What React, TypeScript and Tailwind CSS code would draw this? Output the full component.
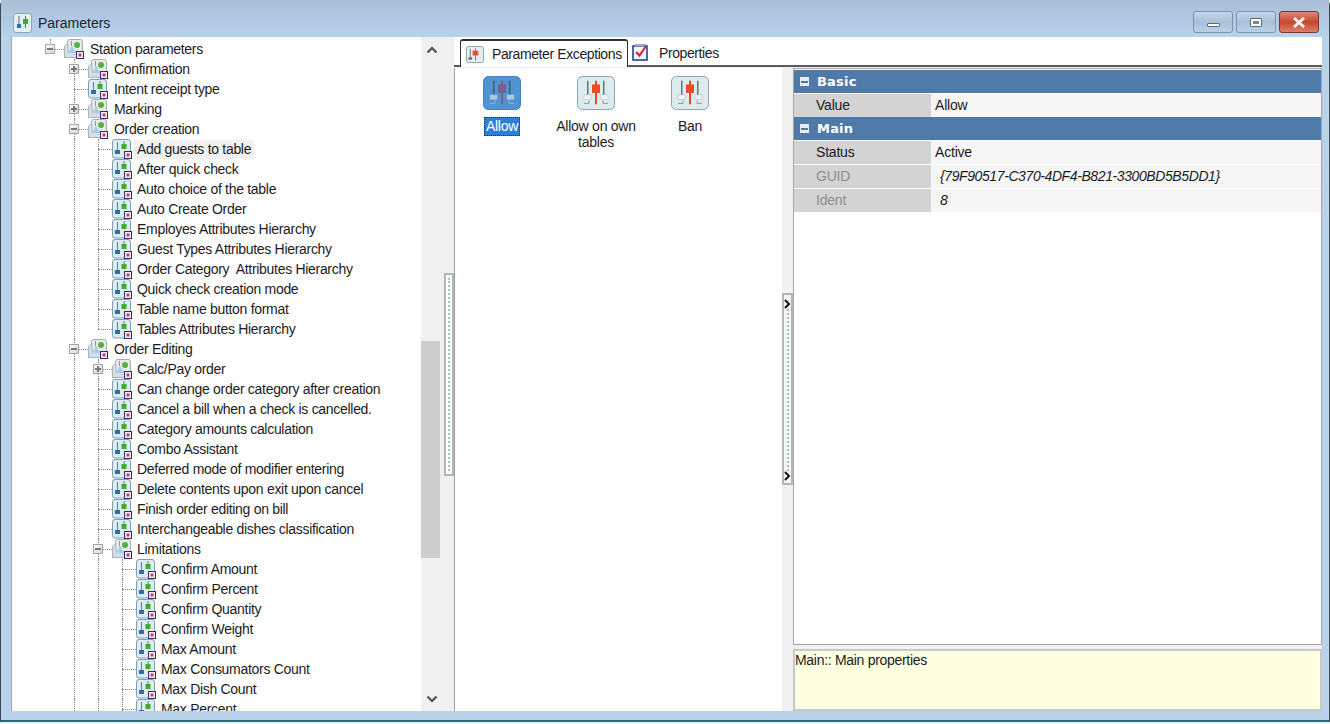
import React from 'react';

type Node = { label: string; level: number; exp?: '+' | '-'; group?: boolean; last?: boolean; under?: number[]; selected?: boolean };

const oc = [1];
const oe = [1];
const lim = [1, 2];

const tree: Node[] = [
  { label: 'Station parameters', level: 0, exp: '-', group: true },
  { label: 'Confirmation', level: 1, exp: '+', group: true },
  { label: 'Intent receipt type', level: 1 },
  { label: 'Marking', level: 1, exp: '+', group: true },
  { label: 'Order creation', level: 1, exp: '-', group: true },
  { label: 'Add guests to table', level: 2, under: oc, selected: true },
  { label: 'After quick check', level: 2, under: oc },
  { label: 'Auto choice of the table', level: 2, under: oc },
  { label: 'Auto Create Order', level: 2, under: oc },
  { label: 'Employes Attributes Hierarchy', level: 2, under: oc },
  { label: 'Guest Types Attributes Hierarchy', level: 2, under: oc },
  { label: 'Order Category  Attributes Hierarchy', level: 2, under: oc },
  { label: 'Quick check creation mode', level: 2, under: oc },
  { label: 'Table name button format', level: 2, under: oc },
  { label: 'Tables Attributes Hierarchy', level: 2, under: oc, last: true },
  { label: 'Order Editing', level: 1, exp: '-', group: true },
  { label: 'Calc/Pay order', level: 2, exp: '+', group: true, under: oe },
  { label: 'Can change order category after creation', level: 2, under: oe },
  { label: 'Cancel a bill when a check is cancelled.', level: 2, under: oe },
  { label: 'Category amounts calculation', level: 2, under: oe },
  { label: 'Combo Assistant', level: 2, under: oe },
  { label: 'Deferred mode of modifier entering', level: 2, under: oe },
  { label: 'Delete contents upon exit upon cancel', level: 2, under: oe },
  { label: 'Finish order editing on bill', level: 2, under: oe },
  { label: 'Interchangeable dishes classification', level: 2, under: oe },
  { label: 'Limitations', level: 2, exp: '-', group: true, under: oe },
  { label: 'Confirm Amount', level: 3, under: lim },
  { label: 'Confirm Percent', level: 3, under: lim },
  { label: 'Confirm Quantity', level: 3, under: lim },
  { label: 'Confirm Weight', level: 3, under: lim },
  { label: 'Max Amount', level: 3, under: lim },
  { label: 'Max Consumators Count', level: 3, under: lim },
  { label: 'Max Dish Count', level: 3, under: lim },
  { label: 'Max Percent', level: 3, under: lim },
];

function ParamIcon({ group }: { group?: boolean }) {
  return (
    <svg width="20" height="20" viewBox="0 0 20 20" className="shrink-0">
      {group ? (
        <>
          <rect x="3.500" y="0.500" width="15" height="16" rx="2" fill="#e6ebe8" stroke="#a3b0b2" />
          <path d="M0.500 18.500 V7 L4 4.500 V13 H13 V18.500 Z" fill="#d5dee0" stroke="#a9b5ba" />
          <path d="M4 14 L8 7 L12 14 Z" fill="#a9cbe4" />
          <rect x="7" y="2" width="1" height="5" fill="#8a979e" />
          <circle cx="13" cy="6" r="3" fill="#58b043" />
        </>
      ) : (
        <>
          <rect x="0.500" y="0.500" width="18" height="18.500" rx="2.500" fill="#dcecf1" stroke="#7d9fb0" />
          <rect x="5" y="3" width="1" height="8" fill="#6a7985" />
          <rect x="3" y="11" width="5" height="4" fill="#2f6db1" />
          <rect x="11.500" y="2" width="1" height="4" fill="#6a7985" />
          <rect x="9.500" y="5" width="5" height="5" fill="#3cad2c" />
        </>
      )}
      <rect x="12.500" y="12.500" width="7" height="7" fill="#fbeef2" stroke="#26307c" />
      <rect x="14.500" y="14.500" width="3" height="3" fill="#d8376b" />
    </svg>
  );
}

function ExceptionIcon({ selected }: { selected?: boolean }) {
  const knob = selected ? '#7a5d8a' : '#ee4b25';
  const line = selected ? '#3b5f86' : '#66747c';
  return (
    <svg width="38" height="34" viewBox="0 0 38 36" preserveAspectRatio="none">
      <rect x="0.500" y="0.500" width="37" height="35" rx="5" fill={selected ? '#4f93d1' : '#dcebee'} stroke={selected ? '#3f7fb8' : '#8aa0a8'} />
      <rect x="10" y="5" width="1.500" height="15" fill={line} />
      <rect x="26" y="5" width="1.500" height="15" fill={line} />
      <rect x="18" y="5" width="2" height="25" fill={knob} />
      <rect x="15" y="9" width="8" height="9" fill={knob} />
      <rect x="7" y="20" width="7" height="5" fill={selected ? '#a9c8e4' : '#f2f6f7'} stroke="#a8b4ba" strokeWidth="0.500" />
      <rect x="24" y="20" width="7" height="5" fill={selected ? '#a9c8e4' : '#f2f6f7'} stroke="#a8b4ba" strokeWidth="0.500" />
      <path d="M7 29 H12 V26 M26 26 V29 H31" fill="none" stroke={selected ? '#8fb4d6' : '#8a979e'} />
    </svg>
  );
}

function Expander({ kind }: { kind: '+' | '-' }) {
  return (
    <span className="absolute left-[7px] top-[5px] z-10 flex h-[10px] w-[10px] items-center justify-center border border-[#a6a6a6] bg-gradient-to-br from-white to-[#d4d4d4]">
      <span className="relative block h-[6px] w-[6px]">
        <span className="absolute left-0 top-[2px] h-[2px] w-[6px] bg-[#6b7b8c]" />
        {kind === '+' && <span className="absolute left-[2px] top-0 h-[6px] w-[2px] bg-[#6b7b8c]" />}
      </span>
    </span>
  );
}

function TreeRow({ node }: { node: Node }) {
  const cols = [0, 1, 2, 3];
  return (
    <div className="flex h-5 shrink-0 items-center">
      {cols.slice(0, node.level + 1).map((c) => {
        const own = c === node.level;
        const through = !own && (node.under ?? []).includes(c);
        return (
          <span key={c} className="relative block h-5 w-6 shrink-0">
            {through && <span className="absolute left-[12px] top-0 h-5 border-l border-dotted border-[#8a8a8a]" />}
            {own && (
              <>
                <span className={`absolute left-[12px] top-0 border-l border-dotted border-[#8a8a8a] ${node.last || c === 0 ? 'h-[10px]' : 'h-5'}`} />
                <span className="absolute left-[12px] top-[10px] w-[14px] border-t border-dotted border-[#8a8a8a]" />
                {node.exp && <Expander kind={node.exp} />}
              </>
            )}
          </span>
        );
      })}
      <span className="ml-[2px]">
        <ParamIcon group={node.group} />
      </span>
      <span className={`whitespace-pre px-[3px] text-[14px] leading-[19px] tracking-[-0.3px] text-[#1c1c1c] ${node.level >= 2 ? 'ml-[2px]' : 'ml-[3px]'} ${node.selected ? 'bg-[#f1f1f1]' : ''}`}>
        {node.label}
      </span>
    </div>
  );
}

function Chevron({ up }: { up?: boolean }) {
  return (
    <svg width="12" height="8" viewBox="0 0 12 8">
      <path d={up ? 'M1.500 6.500 L6 2 L10.500 6.500' : 'M1.500 1.500 L6 6 L10.500 1.500'} fill="none" stroke="#505050" strokeWidth="2.200" />
    </svg>
  );
}

function GripDots() {
  return <span className="block w-0 flex-1 border-l-2 border-dotted border-[#9cc0d6]" />;
}

function GridHeader({ label }: { label: string }) {
  return (
    <div className="flex h-[23px] items-center bg-[#4f79a6] pl-[6px]">
      <span className="flex h-[9px] w-[9px] items-center justify-center bg-[#e8eef4]">
        <span className="h-[2px] w-[7px] bg-[#4f79a6]" />
      </span>
      <span className="ml-[8px] font-['DejaVu_Sans'] text-[13px] font-bold leading-none tracking-[0.2px] text-white">{label}</span>
    </div>
  );
}

function GridRow({ label, value, muted }: { label: string; value: string; muted?: boolean }) {
  return (
    <div className="mt-[1px] flex h-[23px] items-center tracking-[-0.2px]">
      <div className={`flex h-full w-[137px] items-center bg-[#d3d3d3] pl-[22px] ${muted ? 'text-[#8f8f8f]' : 'text-[#1c1c1c]'}`}>{label}</div>
      <div className={`flex h-full flex-1 items-center bg-[#f6f6f6] ${muted ? 'pl-[9px] italic tracking-[-0.4px]' : 'pl-[4px]'} text-[#1c1c1c]`}>{value}</div>
    </div>
  );
}

export default function App() {
  return (
    <div className="flex h-[724px] w-[1330px] flex-col overflow-hidden bg-[#eaf1f4] font-['Liberation_Sans',Arial,sans-serif] text-[14px]">
      <div className="flex h-[722px] flex-col rounded-t-[5px] border-x border-b-2 border-x-[#3b4a55] border-b-[#2c6a78] bg-[#b8d2ea]">
        {/* title bar */}
        <div className="flex h-[37px] shrink-0 items-start bg-gradient-to-b from-[#a7bed6] to-[#b9d3ec] pl-[12px] pr-[10px] pt-[11px]">
          <svg width="20" height="20" viewBox="0 0 20 20" className="mt-[2px]">
            <rect x="0.500" y="0.500" width="18" height="19" rx="2.500" fill="#e4eff3" stroke="#8ea8b5" />
            <rect x="5.500" y="3" width="1" height="8" fill="#5b6b78" />
            <rect x="4" y="11" width="4" height="4" fill="#2f6db1" />
            <rect x="12" y="3" width="1" height="12" fill="#5b6b78" />
            <rect x="10" y="6" width="5" height="5" fill="#3cad2c" />
          </svg>
          <span className="ml-[5px] mt-[3px] text-[14px] leading-[18px] text-[#1a2530]">Parameters</span>
          <div className="ml-auto flex gap-[3px]">
            <button className="flex h-[22px] w-[40px] items-center justify-center rounded-[3px] border border-[#7d93ab] bg-gradient-to-b from-[#c5d6e8] via-[#a9c0d8] to-[#b9d0e6]">
              <span className="mt-[5px] h-[4px] w-[13px] rounded-[1px] border border-[#5c6d80] bg-white" />
            </button>
            <button className="flex h-[22px] w-[40px] items-center justify-center rounded-[3px] border border-[#7d93ab] bg-gradient-to-b from-[#c5d6e8] via-[#a9c0d8] to-[#b9d0e6]">
              <span className="flex h-[9px] w-[12px] items-center justify-center rounded-[1px] border border-[#5c6d80] bg-white">
                <span className="h-[3px] w-[6px] bg-[#7a8a9c]" />
              </span>
            </button>
            <button className="flex h-[22px] w-[40px] items-center justify-center rounded-[3px] border border-[#6e3b3b] bg-gradient-to-b from-[#e0877a] via-[#c9442c] to-[#d9806c]">
              <svg width="14" height="11" viewBox="0 0 14 11">
                <path d="M2 1 L12 10 M12 1 L2 10" stroke="#f4f0ee" strokeWidth="3" />
              </svg>
            </button>
          </div>
        </div>

        {/* client area */}
        <div className="ml-[10px] mr-[7px] flex h-[674px] shrink-0 bg-[#f0f0f0]">
          {/* tree */}
          <div className="flex w-[431px] shrink-0 border-l border-[#9fa9b0] bg-white">
            <div className="flex flex-1 flex-col overflow-hidden pl-[26px] pt-[2px]">
              {tree.map((n) => (
                <TreeRow key={n.label} node={n} />
              ))}
            </div>
            <div className="flex w-[21px] shrink-0 flex-col items-center bg-[#f0f0f0]">
              <div className="flex h-[17px] shrink-0 items-end justify-center"><Chevron up /></div>
              <div className="h-[287px] shrink-0" />
              <div className="h-[217px] w-[19px] shrink-0 self-start bg-[#cdcdcd]" />
              <div className="flex-1" />
              <div className="flex h-[16px] shrink-0 items-start justify-center"><Chevron /></div>
            </div>
          </div>

          {/* left splitter */}
          <div className="flex w-[12px] shrink-0 flex-col pl-[2px] pt-[236px]">
            <div className="flex h-[203px] w-[10px] flex-col items-center border-2 border-[#b4b4b4] bg-white py-[3px]">
              <GripDots />
            </div>
          </div>

          {/* right side */}
          <div className="flex min-w-0 flex-1 flex-col bg-white">
            <div className="flex h-[30px] shrink-0 items-end border-b-2 border-[#5a5a5a] pl-[6px]">
              <div className="mb-[-2px] flex h-[28px] w-[168px] items-center rounded-t-[3px] border-x border-t-2 border-x-[#333] border-t-[#333] bg-white pl-[5px]">
                <svg width="18" height="19" viewBox="0 0 38 36">
                  <rect x="1" y="1" width="36" height="34" rx="5" fill="#e4eff2" stroke="#8aa0a8" strokeWidth="2" />
                  <rect x="8" y="6" width="2" height="22" fill="#66747c" />
                  <rect x="14" y="10" width="12" height="10" fill="#ee4b25" />
                  <rect x="19" y="5" width="2" height="26" fill="#ee4b25" />
                  <rect x="5" y="24" width="8" height="5" fill="#66747c" />
                </svg>
                <span className="ml-[8px] tracking-[-0.4px] text-[#1c1c1c]">Parameter Exceptions</span>
              </div>
              <div className="ml-[4px] flex h-[28px] items-center pt-[5px]">
                <svg width="18" height="18" viewBox="0 0 18 18" className="mt-[-4px]">
                  <rect x="1" y="3" width="14" height="14" fill="#f4f6fb" stroke="#2a3f9c" strokeWidth="1.600" />
                  <rect x="3" y="1" width="11" height="2.500" fill="#9aa6cc" />
                  <path d="M4 9 L7.500 12.500 L14 3" fill="none" stroke="#d8263c" strokeWidth="2.200" />
                </svg>
                <span className="ml-[9px] tracking-[-0.4px] text-[#1c1c1c]">Properties</span>
              </div>
            </div>

            <div className="flex min-h-0 flex-1 bg-[#f0f0f0] pt-[1px]">
              {/* exceptions list */}
              <div className="grid w-[328px] shrink-0 grid-cols-[94px_94px_94px] content-start border-l border-[#a0a0a0] bg-white pt-[8px] tracking-[-0.25px]">
                <div className="flex flex-col items-center text-center">
                  <ExceptionIcon selected />
                  <span className="mt-[7px] border border-dotted border-[#10365e] bg-[#2f7fd4] px-[1px] leading-[17px] text-white">Allow</span>
                </div>
                <div className="flex flex-col items-center text-center">
                  <ExceptionIcon />
                  <span className="mt-[8px] w-[90px] leading-[16px] text-[#1c1c1c]">Allow on own tables</span>
                </div>
                <div className="flex flex-col items-center text-center">
                  <ExceptionIcon />
                  <span className="mt-[8px] leading-[16px] text-[#1c1c1c]">Ban</span>
                </div>
              </div>

              {/* right splitter */}
              <div className="flex w-[11px] shrink-0 flex-col pt-[225px]">
                <div className="flex h-[192px] w-[11px] flex-col items-center border-2 border-[#b4b4b4] bg-[#f4f4f4] pb-[2px] pt-[4px]">
                  <svg width="7" height="10" viewBox="0 0 7 10" className="shrink-0"><path d="M1 1 L5 5 L1 9" fill="none" stroke="#111" strokeWidth="2" /></svg>
                  <GripDots />
                  <svg width="7" height="10" viewBox="0 0 7 10" className="shrink-0"><path d="M1 1 L5 5 L1 9" fill="none" stroke="#111" strokeWidth="2" /></svg>
                </div>
              </div>

              {/* property grid + help */}
              <div className="flex min-w-0 flex-1 flex-col">
                <div className="h-[577px] shrink-0 border border-[#a6a6a6] bg-white pt-[1px]">
                  <GridHeader label="Basic" />
                  <GridRow label="Value" value="Allow" />
                  <GridHeader label="Main" />
                  <GridRow label="Status" value="Active" />
                  <GridRow label="GUID" value="{79F90517-C370-4DF4-B821-3300BD5B5DD1}" muted />
                  <GridRow label="Ident" value="8" muted />
                </div>
                <div className="mt-[4px] flex-1 border-2 border-[#c8c8c8] bg-[#ffffe1] pl-[0px] pt-[1px] leading-[16px] tracking-[-0.3px] text-[#1c1c1c]">
                  Main:: Main properties
                </div>
              </div>
            </div>
          </div>
        </div>
      </div>
    </div>
  );
}
